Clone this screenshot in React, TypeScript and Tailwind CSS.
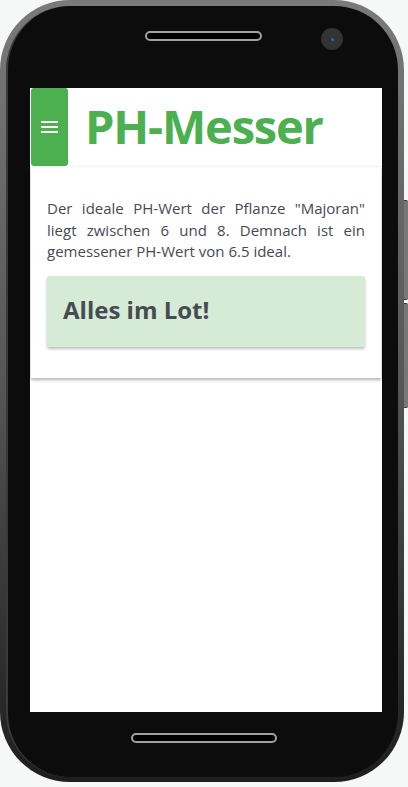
const SideButtons = () => (
    <div className="mt-[200px] flex w-[4px] flex-col gap-[3px]">
        <div className="h-[100px] rounded-r-[2px] border-y border-[#3a3a3a] bg-[#777]" />
        <div className="h-[105px] rounded-r-[2px] border-y border-[#3a3a3a] bg-[#777]" />
    </div>
);

const Header = () => (
    <div className="flex h-[78px] items-stretch shadow-[0_1px_2px_rgba(0,0,0,0.06)]">
        <div className="ml-[1px] flex w-[37px] flex-col items-center justify-center gap-[3px] rounded-[3px] bg-[#4caf50]">
            <div className="h-[2px] w-[17px] bg-white" />
            <div className="h-[2px] w-[17px] bg-white" />
            <div className="h-[2px] w-[17px] bg-white" />
        </div>
        <h1 className="ml-[17px] flex items-center pb-[2px] text-[47px] font-bold tracking-[-1.2px] text-[#4caf50]">
            PH-Messer
        </h1>
    </div>
);

const ResultCard = () => (
    <div className="mx-[1px] px-[16px] pb-[31px] pt-[32px] shadow-[0_2px_3px_rgba(0,0,0,0.3)]">
        <p className="text-justify text-[15px] leading-[21.5px] text-[#454a52]">
            Der ideale PH-Wert der Pflanze "Majoran" liegt zwischen 6 und 8.
            Demnach ist ein gemessener PH-Wert von 6.5 ideal.
        </p>
        <div className="mt-[13px] flex h-[71px] items-center rounded-[2px] bg-[#d5ebd5] px-[16px] shadow-[0_2px_3px_rgba(0,0,0,0.25)]">
            <h3 className="pb-[2px] text-[24px] font-bold text-[#464a52]">
                Alles im Lot!
            </h3>
        </div>
    </div>
);

const App = () => {
    return (
        <div
            className="flex h-[787px] w-[408px] bg-[#f6f8f8]"
            style={{ fontFamily: '"Open Sans", "Noto Sans", sans-serif' }}
        >
            <div className="h-[782px] w-[404px] rounded-[70px] bg-gradient-to-b from-[#7a7a7a] via-[#555] to-[#1e1e1e] p-[6px] pb-[5px]">
                <div className="flex h-full flex-col rounded-[64px] border-l-[2px] border-[#3a3a3a] bg-[#0c0c0c] pl-[22px] pr-[14px]">
                    <div className="flex h-[82px] items-start">
                        <div className="ml-[115px] mt-[25px] h-[10px] w-[117px] rounded-full border-2 border-[#a0a0a0] bg-black" />
                        <div className="ml-[59px] mt-[22px] flex h-[22px] w-[22px] items-center justify-center rounded-full bg-[#333]">
                            <div className="h-[3px] w-[3px] rounded-full bg-[#1e6fb0]" />
                        </div>
                    </div>
                    <div className="h-[624px] w-[352px] bg-white">
                        <Header />
                        <ResultCard />
                    </div>
                    <div className="flex justify-center pr-[6px] pt-[21px]">
                        <div className="h-[10px] w-[146px] rounded-full border-2 border-[#a0a0a0] bg-black" />
                    </div>
                </div>
            </div>
            <SideButtons />
        </div>
    );
};

export default App;
